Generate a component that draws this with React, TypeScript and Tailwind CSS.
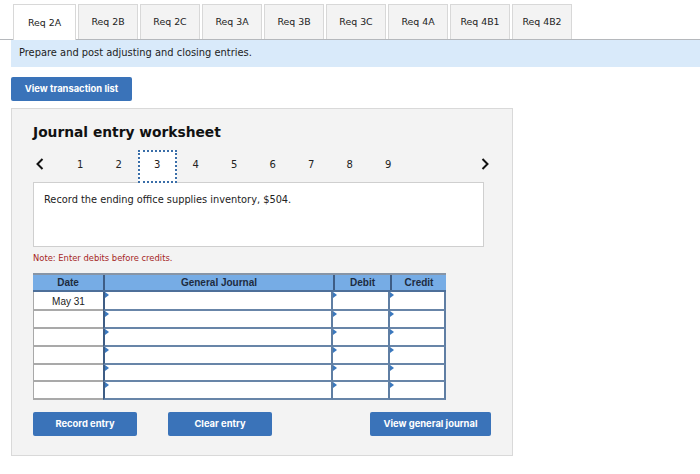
const tabs = ["Req 2A", "Req 2B", "Req 2C", "Req 3A", "Req 3B", "Req 3C", "Req 4A", "Req 4B1", "Req 4B2"];
const steps = [1, 2, 3, 4, 5, 6, 7, 8, 9];
const rowHeights = ["h-[19px]", "h-[18px]", "h-[18px]", "h-[18px]", "h-[17px]", "h-[18px]"];

function Marker() {
  return <span className="absolute left-0 top-0 border-y-[3px] border-l-[4px] border-y-transparent border-l-[#3b78bd]" />;
}

function InputCell({ className }: { className: string }) {
  return (
    <div className={`relative bg-white border-b-2 border-r-2 border-b-[#6885a8] border-r-[#5f7ea3] ${className}`}>
      <Marker />
    </div>
  );
}

function BlueButton({ label, className }: { label: string; className: string }) {
  return (
    <button className={`h-6 pt-px bg-[#3a73b9] rounded-[2px] text-white text-[9.4px] font-bold font-['Inter',sans-serif] ${className}`}>
      {label}
    </button>
  );
}

export default function App() {
  return (
    <div className="w-[700px] h-[474px] bg-white overflow-hidden font-['DejaVu_Sans',sans-serif] text-[#222]">
      {/* tabs */}
      <div className="flex gap-[2px] pl-[13px] pt-1 h-10 border-b border-[#b5b8bc]">
        {tabs.map((t, i) => (
          <div
            key={t}
            className={`pt-px flex items-center justify-center text-[9.4px] border border-b-0 border-[#d8d8d8] ${
              i === 0 ? "w-[63px] bg-white h-[36px]" : "w-[60px] bg-[#f3f3f3] h-[35px]"
            }`}
          >
            {t}
          </div>
        ))}
      </div>

      <div className="ml-[11px] h-[27px] bg-[#d9eafa] pl-2 flex items-center text-[9.9px]">
        Prepare and post adjusting and closing entries.
      </div>

      <BlueButton label="View transaction list" className="block ml-[11px] mt-[10px] w-[121px]" />

      {/* worksheet panel */}
      <div className="ml-[11px] mt-[7px] w-[502px] h-[348px] bg-[#f3f3f3] border border-[#d9d9d9] pl-[21px]">
        <h2 className="mt-[14px] text-[13.8px] leading-[18px] font-bold text-[#111]">Journal entry worksheet</h2>

        <div className="flex items-center h-[33px] mt-[9px] relative">
          <svg width="8" height="12" viewBox="0 0 8 12" className="ml-[3px] mr-[17px] mb-[5px]">
            <path d="M6.5 1 L1.5 6 L6.5 11" fill="none" stroke="#111" strokeWidth="2" />
          </svg>
          {steps.map((n) => (
            <div
              key={n}
              className={`w-[38.5px] h-[33px] pb-[5px] flex items-center justify-center text-[10px] ${
                n === 3 ? "bg-white border-2 border-dotted border-[#3a6ea8]" : ""
              }`}
            >
              {n}
            </div>
          ))}
          <svg width="8" height="12" viewBox="0 0 8 12" className="ml-[73px] mb-[5px]">
            <path d="M1.5 1 L6.5 6 L1.5 11" fill="none" stroke="#111" strokeWidth="2" />
          </svg>
        </div>

        <div className="w-[451px] h-[65px] bg-white border border-[#cfcfcf] -mt-[1px] pl-[10px] pt-[11px] text-[9.8px] leading-[12px]">
          Record the ending office supplies inventory, $504.
        </div>

        <p className="mt-[6px] text-[8.4px] leading-[10px] font-medium text-[#a51f24]">Note: Enter debits before credits.</p>

        {/* journal table */}
        <div className="mt-[10px] w-[413px] font-['Liberation_Sans',sans-serif]">
          <div className="flex h-[19px] bg-[#76ace5] border-y-2 border-t-[#8795a6] border-b-[#4d6f99] text-[10px] font-bold text-[#1d2b3f] items-center">
            <div className="w-[70px] text-center">Date</div>
            <div className="w-[230px] h-full border-l-2 border-[#3e5d85] text-center leading-[16px]">General Journal</div>
            <div className="w-[57px] h-full border-l-2 border-[#3e5d85] text-center leading-[16px]">Debit</div>
            <div className="w-[56px] h-full border-l-2 border-[#3e5d85] text-center leading-[16px]">Credit</div>
          </div>
          {rowHeights.map((h, i) => (
            <div key={i} className={`flex ${h}`}>
              <div className="w-[70px] pt-px bg-white border-l border-b-2 border-[#a9a9a9] flex items-center justify-center text-[10px] text-[#222]">
                {i === 0 ? "May 31" : ""}
              </div>
              <InputCell className="w-[230px] border-l-2 border-l-[#3e5d85]" />
              <InputCell className="w-[57px]" />
              <InputCell className="w-[56px]" />
            </div>
          ))}
        </div>

        <div className="flex mt-[12px]">
          <BlueButton label="Record entry" className="w-[104px]" />
          <BlueButton label="Clear entry" className="w-[104px] ml-[31px]" />
          <BlueButton label="View general journal" className="w-[121px] ml-[98px]" />
        </div>
      </div>
    </div>
  );
}
